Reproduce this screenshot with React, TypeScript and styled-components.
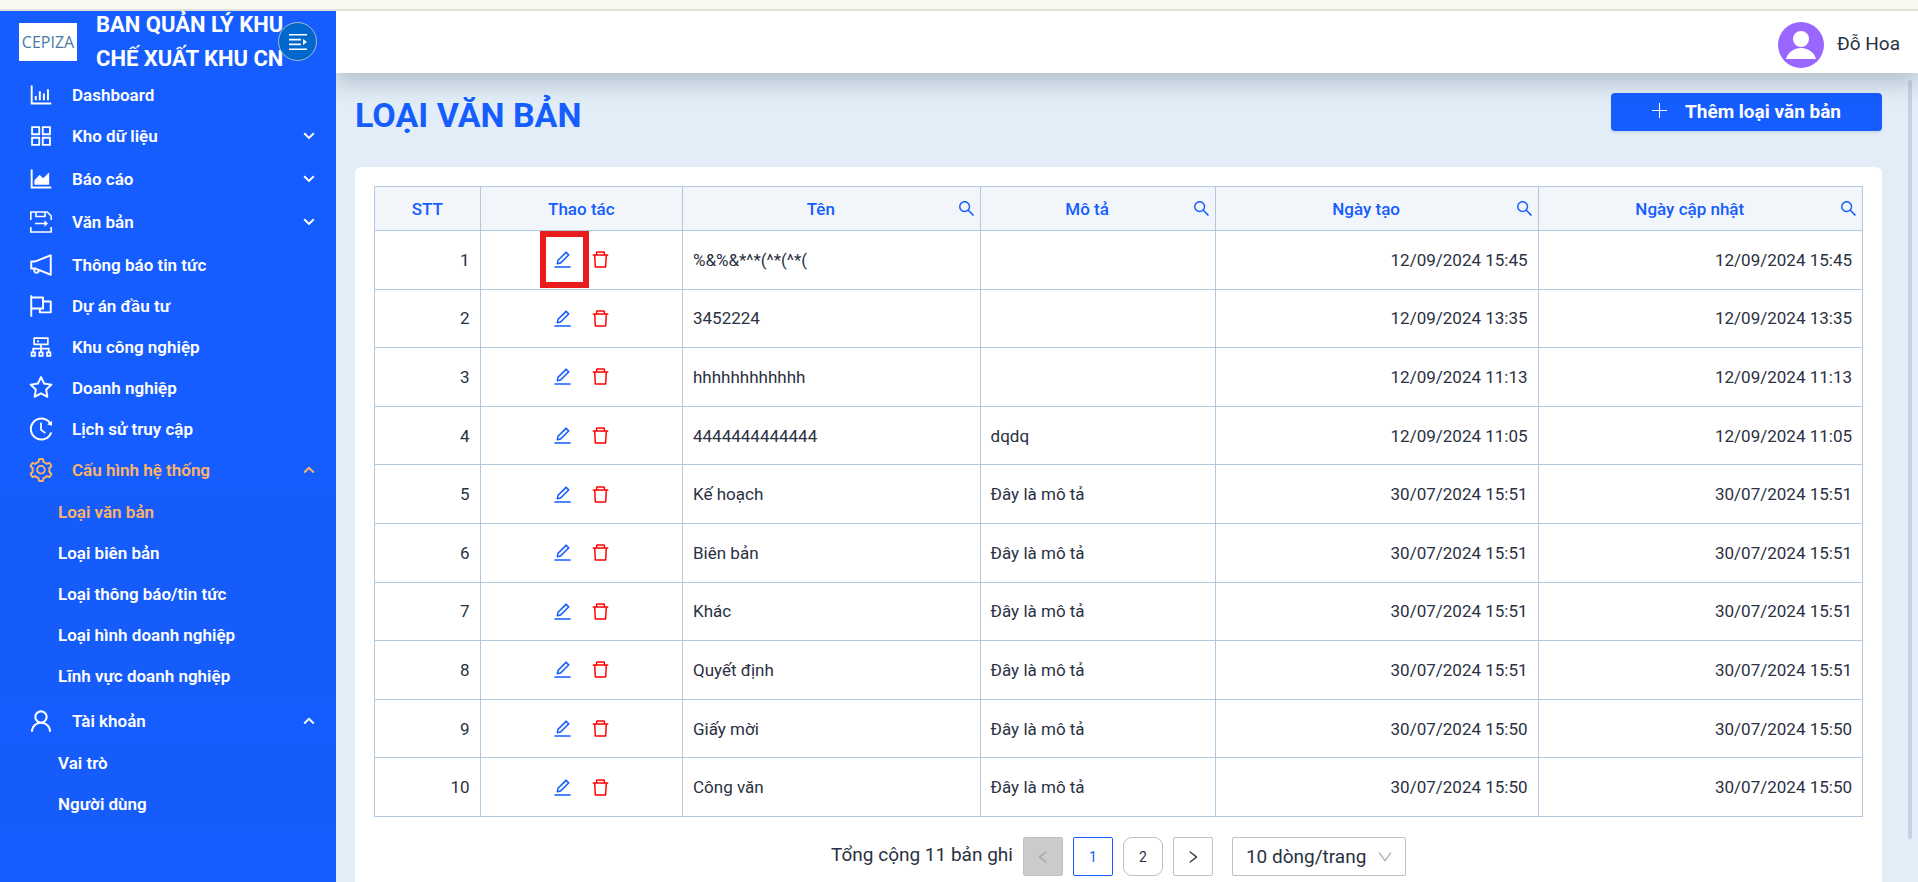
import React from "react";
import styled, { createGlobalStyle } from "styled-components";
import {
  AiOutlineBarChart, AiOutlineAppstore, AiOutlineAreaChart, AiOutlineNotification, AiOutlineFlag,
  AiOutlineCluster, AiOutlineStar, AiOutlineHistory, AiOutlineSetting, AiOutlineUser, AiOutlineEdit,
  AiOutlineDelete, AiOutlineSearch, AiOutlineLeft, AiOutlineRight, AiOutlineDown,
} from "react-icons/ai";

const blue = "#155dff";
const line = "#b0c9e0";
const ink = "#2a3142";

const GlobalStyle = createGlobalStyle`
  *, *::before, *::after { box-sizing: border-box; }
  html, body { height: 100%; }
  body { margin: 0; overflow: hidden; font-family: Roboto, "Noto Sans", sans-serif; font-size: 17px; color: ${ink}; }
  #root { height: 100%; }
  button, select { font: inherit; color: inherit; cursor: pointer; }
  svg { display: block; flex: none; }
`;

const Page = styled.div`display: flex; flex-direction: column; height: 100vh;`;
const TopStrip = styled.div`flex: none; height: 11px; background: #f8faf1; border-bottom: 2px solid #e0e2d8;`;
const Shell = styled.div`flex: 1; min-height: 0; display: flex;`;

const Sidebar = styled.aside`flex: none; width: 336px; background: ${blue}; color: #fff; overflow: hidden;`;
const Brand = styled.div`position: relative; display: flex; align-items: center; height: 63px; padding-left: 19px;`;
const Logo = styled.div`
  display: flex; align-items: center; justify-content: center; width: 58px; height: 38px; margin-top: -1px;
  background: #fff; color: #4a7ba6; font-family: "Open Sans", "Noto Sans", sans-serif; font-size: 16px;
`;
const BrandName = styled.div`
  width: 200px; margin-left: 19px; margin-top: -2px;
  font-size: 22px; line-height: 34px; font-weight: 700; white-space: nowrap;
`;
const Toggle = styled.button`
  position: absolute; right: 19px; top: 11px; width: 39px; height: 39px; padding: 0;
  display: flex; align-items: center; justify-content: center;
  border: 1px solid #a9b9cc; border-radius: 50%; background: #0068cc; color: #fff;
`;
const Menu = styled.ul`list-style: none; margin: 0; padding: 0;`;
const SubMenu = styled(Menu)`background: #165cfb; padding-bottom: 3px;`;
const Entry = styled.a<{ $active?: boolean }>`
  display: flex; align-items: center; gap: 19px; height: 41px; padding: 0 21px 0 29px;
  font-weight: 600; color: ${p => (p.$active ? "#ffb366" : "#fff")}; text-decoration: none; white-space: nowrap;
`;
const GroupEntry = styled.button<{ $active?: boolean }>`
  display: flex; align-items: center; gap: 19px; width: 100%; height: 43px; padding: 0 21px 2px 29px;
  border: 0; background: none; text-align: left;
  && { font-weight: 600; color: ${p => (p.$active ? "#ffb366" : "#fff")}; }
`;
const SubEntry = styled(Entry)`padding-left: 58px; padding-bottom: 2px;`;
const Grow = styled.span`flex: 1;`;

const Main = styled.div`flex: 1; min-width: 0; display: flex; flex-direction: column;`;
const Header = styled.header`
  position: relative; flex: none; display: flex; align-items: center; justify-content: flex-end; gap: 13px;
  height: 62px; padding: 6px 18px 0 0; background: #fff; box-shadow: 0 10px 22px rgba(30, 50, 70, 0.24);
  clip-path: inset(0 0 -40px 0);
`;
const UserName = styled.span`font-size: 19px; line-height: 24px; padding-bottom: 2px;`;
const Content = styled.main`flex: 1; min-height: 0; display: flex; gap: 26px; padding: 0 6px 0 19px; background: #e2edf7;`;
const Body = styled.div`flex: 1; min-width: 0;`;
const ScrollBar = styled.div`flex: none; width: 4px; margin: 7px 0 43px; border-radius: 2px; background: #c2d2e1;`;
const TitleRow = styled.div`display: flex; align-items: flex-start; justify-content: space-between; height: 94px; padding-top: 20px;`;
const Title = styled.h1`margin: 0; font-size: 34px; line-height: 45px; font-weight: 700; color: ${blue};`;
const AddButton = styled.button`
  display: flex; align-items: center; justify-content: center; gap: 17px; width: 271px; height: 38px; padding: 0 0 2px;
  border: 0; border-radius: 4px; background: ${blue}; box-shadow: 0 2px 2px rgba(0, 60, 160, 0.1);
  && { color: #fff; font-size: 19px; font-weight: 700; }
`;
const Card = styled.section`padding: 19px; background: #fff; border-radius: 6px 6px 0 0;`;

const Table = styled.table`
  width: 100%; height: 631px; border-collapse: collapse; table-layout: fixed;
  th, td { border: 1px solid ${line}; padding: 0 10px; }
  th { height: 44px; background: #f2f5fa; color: ${blue}; font-weight: 500; }
`;
const Col = styled.col<{ $w: string }>`width: ${p => p.$w};`;
const HeadCell = styled.div`display: flex; align-items: center; justify-content: center; margin-right: -6px;`;
const HeadLabel = styled.span`flex: 1; text-align: center; padding-right: 8px;`;
const IconButton = styled.button<{ $color: string }>`
  position: relative; display: inline-flex; padding: 0; border: 0; background: none;
  && { color: ${p => p.$color}; }
`;
const Marker = styled.span`position: absolute; inset: -18px -16px -18px -12px; border: 6px solid #e81c1c; pointer-events: none;`;
const Cell = styled.td<{ $align?: string }>`text-align: ${p => p.$align || "left"}; font-weight: 400;`;
const Actions = styled.div`display: flex; justify-content: center; gap: 17px;`;

const Pager = styled.nav`display: flex; align-items: center; justify-content: center; gap: 10px; margin-top: 20px;`;
const Total = styled.span`font-size: 19px; line-height: 22px; padding-bottom: 4px;`;
const PageButton = styled.button<{ $kind?: "active" | "off" | "round" }>`
  display: flex; align-items: center; justify-content: center; width: 40px; height: 39px; padding: 0;
  border: 1px solid ${p => (p.$kind === "active" ? blue : "#bfbfc4")};
  border-radius: ${p => (p.$kind === "round" ? "9px" : "2px")};
  background: ${p => (p.$kind === "off" ? "#cbcbcb" : "#fff")};
  && { color: ${p => (p.$kind === "active" ? blue : p.$kind === "off" ? "#a2a2a2" : ink)}; font-size: 14px; }
`;
const SizeBox = styled.div`position: relative; display: flex; align-items: center; margin-left: 9px;`;
const SizeSelect = styled.select`
  appearance: none; width: 174px; height: 39px; padding: 0 13px; border: 1px solid #bfbfc4; border-radius: 2px; background: #fff;
  && { font-size: 19px; }
`;
const SelectArrow = styled.span`position: absolute; right: 12px; color: #b5b5b5; pointer-events: none;`;

const Chevron = ({ up }: { up?: boolean }) => (
  <svg width="12" height="10" viewBox="0 0 12 10" fill="none" stroke="currentColor" strokeWidth="2">
    <path d={up ? "M1.2 7.5 6 2.8l4.8 4.7" : "M1.2 2.2 6 6.9l4.8-4.7"} />
  </svg>
);
const PlusIcon = () => (
  <svg width="16" height="16" viewBox="0 0 16 16" stroke="currentColor" strokeWidth="1">
    <path d="M7.5 0v15M0 7.5h15" />
  </svg>
);
const DocumentIcon = () => (
  <svg width="24" height="24" viewBox="0 0 24 24" fill="none" stroke="currentColor" strokeWidth="1.6">
    <path d="M1.8 10V2h16.400l4 4v4M7 2v4.500h9V2M1.800 17v5h20.400v-5M6 13.500h11" />
    <path d="M15.500 10.200 19 13.500l-3.500 3.300z" fill="currentColor" stroke="none" />
  </svg>
);
const ToggleIcon = () => (
  <svg width="18" height="16" viewBox="0 0 18 16" fill="currentColor">
    <path d="M0 0h18v1.600H0zM0 4.800h12v1.600H0zM0 9.600h12v1.600H0zM0 14.400h18V16H0zM14 5l4 3-4 3z" />
  </svg>
);
const Avatar = () => (
  <svg width="46" height="46" viewBox="0 0 46 46" role="img" aria-label="Đỗ Hoa">
    <circle cx="23" cy="23" r="23" fill="#9966ff" />
    <circle cx="23" cy="17" r="8" fill="#fff" />
    <path d="M8 37c2-7 8-11 15-11s13 4 15 11z" fill="#fff" />
  </svg>
);

const iconBox = "64 64 896 896";

type Item = { label: string; Icon: React.ComponentType<any>; kids?: string[]; group?: boolean; active?: boolean };
const items: Item[] = [
  { label: "Dashboard", Icon: AiOutlineBarChart },
  { label: "Kho dữ liệu", Icon: AiOutlineAppstore, group: true },
  { label: "Báo cáo", Icon: AiOutlineAreaChart, group: true },
  { label: "Văn bản", Icon: DocumentIcon, group: true },
  { label: "Thông báo tin tức", Icon: AiOutlineNotification },
  { label: "Dự án đầu tư", Icon: AiOutlineFlag },
  { label: "Khu công nghiệp", Icon: AiOutlineCluster },
  { label: "Doanh nghiệp", Icon: AiOutlineStar },
  { label: "Lịch sử truy cập", Icon: AiOutlineHistory },
  {
    label: "Cấu hình hệ thống", Icon: AiOutlineSetting, group: true, active: true,
    kids: ["Loại văn bản", "Loại biên bản", "Loại thông báo/tin tức", "Loại hình doanh nghiệp", "Lĩnh vực doanh nghiệp"],
  },
  { label: "Tài khoản", Icon: AiOutlineUser, group: true, kids: ["Vai trò", "Người dùng"] },
];

const mota = "Đây là mô tả";
const rows = [
  ["%&%&*^*(^*(^*(", "", "12/09/2024 15:45"],
  ["3452224", "", "12/09/2024 13:35"],
  ["hhhhhhhhhhhh", "", "12/09/2024 11:13"],
  ["4444444444444", "dqdq", "12/09/2024 11:05"],
  ["Kế hoạch", mota, "30/07/2024 15:51"],
  ["Biên bản", mota, "30/07/2024 15:51"],
  ["Khác", mota, "30/07/2024 15:51"],
  ["Quyết định", mota, "30/07/2024 15:51"],
  ["Giấy mời", mota, "30/07/2024 15:50"],
  ["Công văn", mota, "30/07/2024 15:50"],
];
const columns = [
  { label: "STT", width: "7.1%" },
  { label: "Thao tác", width: "13.6%" },
  { label: "Tên", width: "20%", search: true },
  { label: "Mô tả", width: "15.8%", search: true },
  { label: "Ngày tạo", width: "21.7%", search: true },
  { label: "Ngày cập nhật", width: "21.8%", search: true },
];

export default function App() {
  return (
    <Page>
      <GlobalStyle />
      <TopStrip />
      <Shell>
        <Sidebar>
          <Brand>
            <Logo>CEPIZA</Logo>
            <BrandName>BAN QUẢN LÝ KHU<br />CHẾ XUẤT KHU CN</BrandName>
            <Toggle aria-label="Thu gọn menu"><ToggleIcon /></Toggle>
          </Brand>
          <Menu>
            {items.map(({ label, Icon, kids, group, active }) => (
              <li key={label}>
                {group ? (
                  <GroupEntry $active={active}>
                    <Icon size={24} viewBox={iconBox} /><Grow>{label}</Grow><Chevron up={!!kids} />
                  </GroupEntry>
                ) : (
                  <Entry href="#"><Icon size={24} viewBox={iconBox} />{label}</Entry>
                )}
                {kids && (
                  <SubMenu>
                    {kids.map((kid, i) => (
                      <li key={kid}><SubEntry href="#" $active={active && i === 0}>{kid}</SubEntry></li>
                    ))}
                  </SubMenu>
                )}
              </li>
            ))}
          </Menu>
        </Sidebar>
        <Main>
          <Header><Avatar /><UserName>Đỗ Hoa</UserName></Header>
          <Content>
            <Body>
              <TitleRow>
                <Title>LOẠI VĂN BẢN</Title>
                <AddButton><PlusIcon />Thêm loại văn bản</AddButton>
              </TitleRow>
              <Card>
                <Table>
                  <colgroup>{columns.map(c => <Col key={c.label} $w={c.width} />)}</colgroup>
                  <thead>
                    <tr>
                      {columns.map(c => (
                        <th key={c.label} scope="col">
                          {c.search ? (
                            <HeadCell>
                              <HeadLabel>{c.label}</HeadLabel>
                              <IconButton $color={blue} aria-label={`Tìm theo ${c.label}`}><AiOutlineSearch size={19} /></IconButton>
                            </HeadCell>
                          ) : c.label}
                        </th>
                      ))}
                    </tr>
                  </thead>
                  <tbody>
                    {rows.map(([name, desc, date], i) => (
                      <tr key={name}>
                        <Cell $align="right">{i + 1}</Cell>
                        <Cell>
                          <Actions>
                            <IconButton $color={blue} aria-label="Sửa"><AiOutlineEdit size={21} />{i === 0 && <Marker />}</IconButton>
                            <IconButton $color="#ff0000" aria-label="Xóa"><AiOutlineDelete size={21} /></IconButton>
                          </Actions>
                        </Cell>
                        <Cell>{name}</Cell>
                        <Cell>{desc}</Cell>
                        <Cell $align="right">{date}</Cell>
                        <Cell $align="right">{date}</Cell>
                      </tr>
                    ))}
                  </tbody>
                </Table>
                <Pager aria-label="Phân trang">
                  <Total>Tổng cộng 11 bản ghi</Total>
                  <PageButton $kind="off" disabled aria-label="Trang trước"><AiOutlineLeft size={16} /></PageButton>
                  <PageButton $kind="active">1</PageButton>
                  <PageButton $kind="round">2</PageButton>
                  <PageButton aria-label="Trang sau"><AiOutlineRight size={16} /></PageButton>
                  <SizeBox>
                    <SizeSelect aria-label="Số dòng mỗi trang" defaultValue="10">
                      <option value="10">10 dòng/trang</option>
                    </SizeSelect>
                    <SelectArrow><AiOutlineDown size={18} /></SelectArrow>
                  </SizeBox>
                </Pager>
              </Card>
            </Body>
            <ScrollBar />
          </Content>
        </Main>
      </Shell>
    </Page>
  );
}
